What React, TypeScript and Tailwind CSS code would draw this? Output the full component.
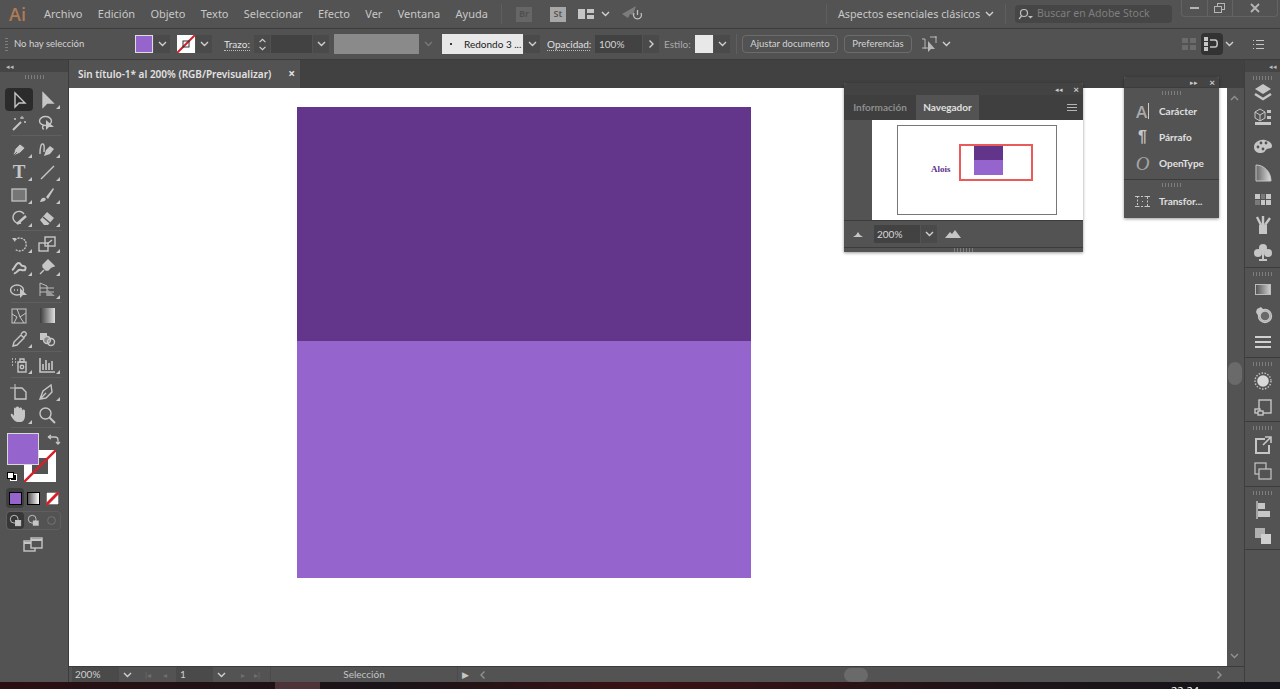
import type { ReactNode } from "react";

const MENU = ["Archivo", "Edición", "Objeto", "Texto", "Seleccionar", "Efecto", "Ver", "Ventana", "Ayuda"];

function Chevron({ className = "" }: { className?: string }) {
  return (
    <svg width="9" height="6" viewBox="0 0 9 6" className={className}>
      <path d="M1 1l3.5 3.5L8 1" fill="none" stroke="#d0d0d0" strokeWidth="1.4" />
    </svg>
  );
}

function ChevBox({ className = "", dim = false }: { className?: string; dim?: boolean }) {
  return (
    <div className={`flex h-[18px] w-4 shrink-0 items-center justify-center ${dim ? "" : "bg-[#4a4a4a]"} ${className}`}>
      <Chevron className={dim ? "opacity-30" : ""} />
    </div>
  );
}

function Grip({ className = "" }: { className?: string }) {
  return (
    <div
      className={`h-[4px] w-[19px] bg-[repeating-linear-gradient(90deg,#7d7d7d_0,#7d7d7d_1px,transparent_1px,transparent_3px)] ${className}`}
    />
  );
}

function Icon({ children, size = 20 }: { children: ReactNode; size?: number }) {
  return (
    <svg width={size} height={size} viewBox="0 0 20 20" fill="none" stroke="#c6c6c6" strokeWidth="1.4">
      {children}
    </svg>
  );
}

// celda de la barra de herramientas
function Tool({ children, fly = false, active = false }: { children: ReactNode; fly?: boolean; active?: boolean }) {
  return (
    <div className={`relative flex h-[23px] w-[28px] items-center justify-center ${active ? "rounded-sm bg-[#2b2b2b]" : ""}`}>
      {children}
      {fly && (
        <span className="absolute bottom-[2px] right-[1px] h-0 w-0 border-b-[4px] border-l-[4px] border-b-[#c6c6c6] border-l-transparent" />
      )}
    </div>
  );
}

function Row({ children }: { children: ReactNode }) {
  return <div className="flex">{children}</div>;
}

function Sep() {
  return <div className="mx-[6px] my-[1px] h-px bg-[#5f5f5f]" />;
}

function LeftToolbar() {
  return (
    <div className="flex w-[69px] flex-col border-r border-[#3c3c3c] bg-[#535353]">
      <div className="flex h-3 items-center bg-[#454545] pl-[6px] text-[7px] leading-none text-[#bbb]">◂◂</div>
      <Grip className="mx-auto mt-[3px] h-[3px]" />
      <div className="mt-[9px] pl-[5px]">
        <Row>
          <Tool active>
            <Icon><path d="M6 3v14l4-4h6z" /></Icon>
          </Tool>
          <Tool fly>
            <Icon><path d="M6 3v14l4-4h6z" fill="#c6c6c6" /></Icon>
          </Tool>
        </Row>
        <Row>
          <Tool>
            <Icon>
              <path d="M4 17l8-8" strokeWidth="2" />
              <path d="M13 3v3M11 5h4M16 8v2M15 9h2M6 5v2M5 6h2" strokeWidth="1" />
            </Icon>
          </Tool>
          <Tool>
            <Icon>
              <ellipse cx="8.5" cy="8" rx="6" ry="4.5" />
              <path d="M7 16c-2 0-2-3 0-4" />
              <path d="M9 7v10l3-3h5z" fill="#c6c6c6" stroke="none" />
            </Icon>
          </Tool>
        </Row>
        <Sep />
        <Row>
          <Tool fly>
            <Icon><path d="M4 17l2-7 5-5 5 4-5 5zM4 17l4-4" fill="#c6c6c6" stroke="#535353" strokeWidth="0.8" /></Icon>
          </Tool>
          <Tool fly>
            <Icon>
              <path d="M7 17l2-6 4-4 4 3-4 5z" fill="#c6c6c6" stroke="none" />
              <path d="M3 15c0-6 1-11 3-10s1 5 1 8" />
            </Icon>
          </Tool>
        </Row>
        <Row>
          <Tool fly>
            <span className="font-['Liberation_Serif',serif] text-[19px] font-bold leading-none text-[#c6c6c6]">T</span>
          </Tool>
          <Tool fly>
            <Icon><path d="M4 17L17 4" /></Icon>
          </Tool>
        </Row>
        <Row>
          <Tool fly>
            <Icon><rect x="3" y="4" width="14" height="12" fill="#767676" stroke="#bcbcbc" /></Icon>
          </Tool>
          <Tool fly>
            <Icon><path d="M3 17c1-4 3-5 5-4s0 4-5 4zM9 12l7-9 1 1-6 10z" fill="#c6c6c6" stroke="none" /></Icon>
          </Tool>
        </Row>
        <Row>
          <Tool fly>
            <Icon>
              <path d="M15 6a6 6 0 1 0-3 9" />
              <path d="M8 16l9-8" strokeWidth="2.4" />
            </Icon>
          </Tool>
          <Tool fly>
            <Icon><path d="M3 12l7-8 7 6-6 7H7z" fill="#c6c6c6" stroke="none" /><path d="M6 9l7 6" stroke="#535353" /></Icon>
          </Tool>
        </Row>
        <Sep />
        <Row>
          <Tool fly>
            <Icon>
              <path d="M6 6a6.5 6.5 0 1 1 0 9" strokeDasharray="2 1" />
              <path d="M3 4l4 0-1 4z" fill="#c6c6c6" stroke="none" />
            </Icon>
          </Tool>
          <Tool fly>
            <Icon>
              <rect x="2" y="9" width="9" height="8" />
              <rect x="8" y="3" width="10" height="9" />
              <path d="M10 10l5-4" />
            </Icon>
          </Tool>
        </Row>
        <Row>
          <Tool fly>
            <Icon><path d="M3 13c3-1 3-7 7-7 2 0 1 3 4 3s3 2 2 4c-3 1-4-1-6 0s-3 4-5 3" strokeWidth="2" /></Icon>
          </Tool>
          <Tool fly>
            <Icon><path d="M11 3l6 6-3 1-3 3-2 0-3-3 0-2 3-3zM7 13l-4 4" fill="#c6c6c6" /></Icon>
          </Tool>
        </Row>
        <Row>
          <Tool>
            <Icon>
              <ellipse cx="8" cy="10" rx="6.5" ry="5" />
              <path d="M5 10h1M8 10h1" />
              <path d="M11 8v10l3-3h4z" fill="#c6c6c6" stroke="none" />
            </Icon>
          </Tool>
          <Tool fly>
            <Icon>
              <path d="M3 3v13M3 3l7 3v10M3 8h14M3 12h14" strokeWidth="0.9" />
              <path d="M10 9l8 7h-8z" fill="#9a9a9a" stroke="none" />
            </Icon>
          </Tool>
        </Row>
        <Sep />
        <Row>
          <Tool>
            <Icon>
              <rect x="3" y="3" width="14" height="14" strokeWidth="1" />
              <path d="M3 8l5 3-3 6M17 7l-6 4 4 6M8 3l3 8" strokeWidth="1" />
            </Icon>
          </Tool>
          <Tool>
            <div className="h-[15px] w-[15px] bg-[linear-gradient(90deg,#3c3c3c,#e0e0e0)]" />
          </Tool>
        </Row>
        <Row>
          <Tool fly>
            <Icon><path d="M4 17l1-4 7-7 3 3-7 7zM12 5l2-2c2-1 4 1 3 3l-2 2" /></Icon>
          </Tool>
          <Tool>
            <Icon>
              <rect x="3" y="4" width="7" height="7" fill="#c6c6c6" stroke="none" />
              <circle cx="10" cy="11" r="3.5" fill="#8a8a8a" />
              <circle cx="14" cy="13" r="3.5" />
            </Icon>
          </Tool>
        </Row>
        <Sep />
        <Row>
          <Tool fly>
            <Icon>
              <rect x="9" y="7" width="8" height="10" />
              <circle cx="13" cy="12" r="1.7" />
              <path d="M11 4h4v3h-4zM3 4h1M6 4h1M3 7h1M6 7h1M3 10h1" />
            </Icon>
          </Tool>
          <Tool fly>
            <Icon><path d="M3 3v14h15M6 15V9M9 15V5M12 15V8M15 15V6" strokeWidth="1.6" /></Icon>
          </Tool>
        </Row>
        <Sep />
        <div className="h-px" />
        <Row>
          <Tool>
            <Icon><path d="M1 6h4M6 2v4" strokeWidth="1" /><path d="M6 6h7l4 4v7H6z" /></Icon>
          </Tool>
          <Tool fly>
            <Icon><path d="M3 17l3-8 8-6 1 7-6 6zM3 17l6-6" /></Icon>
          </Tool>
        </Row>
        <Row>
          <Tool fly>
            <Icon>
              <path d="M6 16c-3-3-5-6-4-7s3 2 3 2V4c0-2 2-2 2 0V3c0-2 3-2 3 0v1c0-2 3-2 3 0v2c0-2 3-2 3 0v5c0 3-2 6-4 6H8z" fill="#c6c6c6" stroke="none" />
            </Icon>
          </Tool>
          <Tool>
            <Icon><circle cx="8.5" cy="8.5" r="5.5" /><path d="M12.5 12.5L18 18" strokeWidth="2" /></Icon>
          </Tool>
        </Row>
        <Sep />
      </div>

      <div className="relative ml-[7px] mt-[4px] h-[49px] w-[49px]">
        <div className="absolute left-[17px] top-[17px] h-[32px] w-[32px] bg-white">
          <div className="absolute left-[8px] top-[8px] h-4 w-4 bg-[#535353]" />
          <svg className="absolute inset-0" viewBox="0 0 32 32">
            <path d="M0 32L32 0" stroke="#d4212b" strokeWidth="2.5" />
          </svg>
        </div>
        <div className="absolute left-0 top-0 h-[32px] w-[32px] border border-[#d8d8d8] bg-[#9664cd]" />
        <svg className="absolute left-[40px] top-0" width="14" height="13" viewBox="0 0 14 13" fill="none" stroke="#c6c6c6" strokeWidth="1.3">
          <path d="M2 4h6c2 0 3 1 3 3v4M1 4l3-2M1 4l3 2M9 9l2 2 2-2" />
        </svg>
      </div>
      <div className="relative ml-[6px] mt-[-10px] h-[9px] w-[11px]">
        <div className="absolute bottom-0 right-0 h-[7px] w-[7px] border border-white bg-black" />
        <div className="absolute left-[1px] top-0 h-[7px] w-[7px] border border-black bg-white" />
      </div>

      <div className="ml-[6px] mt-[7px] flex w-[57px] gap-[2px]">
        <div className="flex h-[20px] w-[18px] items-center justify-center rounded-sm bg-[#3f3f3f]">
          <div className="h-[13px] w-[13px] border border-black bg-[#9664cd]" />
        </div>
        <div className="flex h-[20px] w-[14px] items-center justify-center">
          <div className="h-[13px] w-[13px] border border-black bg-[linear-gradient(90deg,#555,#fff)]" />
        </div>
        <div className="ml-[3px] flex h-[20px] w-[14px] items-center justify-center">
          <svg width="13" height="13" viewBox="0 0 13 13">
            <rect width="13" height="13" fill="#fff" stroke="#000" />
            <path d="M0 13L13 0" stroke="#d4212b" strokeWidth="3" />
          </svg>
        </div>
      </div>

      <div className="ml-[6px] mt-[3px] flex h-[19px] w-[55px] rounded-sm border border-[#5f5f5f]">
        <div className="flex w-[17px] items-center justify-center rounded-sm bg-[#373737]">
          <Icon size={13}><circle cx="8" cy="8" r="6" /><rect x="10" y="10" width="8" height="8" fill="#c6c6c6" /></Icon>
        </div>
        <div className="flex w-[19px] items-center justify-center">
          <Icon size={13}><circle cx="8" cy="8" r="6" /><rect x="9" y="10" width="9" height="8" fill="#c6c6c6" stroke="none" /></Icon>
        </div>
        <div className="flex w-[17px] items-center justify-center opacity-30">
          <Icon size={13}><circle cx="10" cy="10" r="6" /></Icon>
        </div>
      </div>

      <div className="ml-[23px] mt-[5px]">
        <Icon>
          <rect x="1" y="6" width="11" height="10" fill="#535353" />
          <rect x="8" y="3" width="11" height="10" fill="#535353" />
          <path d="M8 5h11M1 8h7" strokeWidth="2" />
        </Icon>
      </div>
    </div>
  );
}

function DockIcon({ children, h = 26 }: { children: ReactNode; h?: number }) {
  return (
    <div className="flex w-full items-center justify-center" style={{ height: h }}>
      {children}
    </div>
  );
}

function DockGroup({ children }: { children: ReactNode }) {
  return (
    <div className="flex flex-col items-center border-b border-[#3c3c3c] pt-[4px]">
      <Grip />
      {children}
    </div>
  );
}

function RightDock() {
  return (
    <div className="flex w-[36px] flex-col border-l border-[#3e3e3e] bg-[#535353]">
      <div className="flex h-3 items-center justify-end bg-[#454545] pr-[3px] text-[7px] leading-none text-[#bbb]">◂◂</div>
      <DockGroup>
        <DockIcon h={24}>
          <Icon>
            <path d="M10 2l8 5-8 5-8-5z" fill="#c6c6c6" stroke="none" />
            <path d="M2 12l8 5 8-5" strokeWidth="2.4" />
          </Icon>
        </DockIcon>
        <DockIcon>
          <Icon>
            <path d="M7 2l5 3v6l-5 3-5-3V5zM2 5l5 3 5-3M7 8v6" strokeWidth="1" />
            <path d="M14 3h4v3h-4zM14 9h4v3h-4z" fill="#c6c6c6" stroke="none" />
            <rect x="2" y="15" width="16" height="3" fill="#c6c6c6" stroke="none" />
          </Icon>
        </DockIcon>
        <DockIcon h={30}>
          <Icon>
            <path d="M1 12c0-5 6-8 11-7 4 1 7 3 7 6s-3 2-5 3-2 4-6 4-7-2-7-6z" fill="#c6c6c6" stroke="none" />
            <circle cx="5" cy="12" r="1.4" fill="#535353" stroke="none" />
            <circle cx="8" cy="8" r="1.4" fill="#535353" stroke="none" />
            <circle cx="13" cy="8" r="1.4" fill="#535353" stroke="none" />
            <circle cx="10" cy="14" r="1.4" fill="#535353" stroke="none" />
          </Icon>
        </DockIcon>
        <DockIcon>
          <svg width="20" height="20" viewBox="0 0 20 20">
            <defs>
              <linearGradient id="sw" x1="0" x2="1">
                <stop offset="0" stopColor="#666" />
                <stop offset="1" stopColor="#ddd" />
              </linearGradient>
            </defs>
            <path d="M3 2c8 0 15 7 15 16H3z" fill="url(#sw)" stroke="#c6c6c6" />
          </svg>
        </DockIcon>
        <DockIcon>
          <svg width="16" height="11" viewBox="0 0 16 11" fill="#c6c6c6">
            <path d="M0 0h5v5H0zM6 0h4v5H6zM11 0h5v5h-5zM0 6h5v5H0zM6 6h4v5H6zM11 6h5v5h-5z" />
            <path d="M6 0h4v5H6zM0 6h5v5H0z" fill="#7a7a7a" />
          </svg>
        </DockIcon>
        <DockIcon>
          <Icon>
            <path d="M6 10h8v9H6z" fill="#c6c6c6" stroke="none" />
            <path d="M8 10L4 2M10 10V1M12 10l5-7" strokeWidth="2.4" />
          </Icon>
        </DockIcon>
        <DockIcon h={27}>
          <Icon>
            <circle cx="10" cy="6" r="4" fill="#c6c6c6" stroke="none" />
            <circle cx="5" cy="11" r="4" fill="#c6c6c6" stroke="none" />
            <circle cx="15" cy="11" r="4" fill="#c6c6c6" stroke="none" />
            <path d="M10 8v10M6 18h8" strokeWidth="2" />
          </Icon>
        </DockIcon>
        <div className="h-[2px]" />
      </DockGroup>
      <DockGroup>
        <DockIcon>
          <div className="h-[11px] w-4 border border-[#bbb] bg-[linear-gradient(90deg,#555,#ccc)]" />
        </DockIcon>
        <DockIcon>
          <Icon>
            <circle cx="12" cy="11" r="6.5" fill="#777" />
            <path d="M4 4l4-2 9 9-4 5c-3 0-9-6-10-9z" fill="#c6c6c6" stroke="none" />
            <circle cx="12" cy="11" r="5" fill="#6a6a6a" />
          </Icon>
        </DockIcon>
        <DockIcon h={27}>
          <svg width="16" height="12" viewBox="0 0 16 12" fill="#d0d0d0">
            <path d="M0 0h16v2H0zM0 5h16v2H0zM0 10h16v2H0z" />
          </svg>
        </DockIcon>
        <div className="h-[2px]" />
      </DockGroup>
      <DockGroup>
        <div className="h-[2px]" />
        <DockIcon>
          <Icon>
            <circle cx="10" cy="10" r="5.8" fill="#d8d8d8" stroke="none" />
            <circle cx="10" cy="10" r="8" strokeDasharray="1.5 1.5" strokeWidth="1.4" />
          </Icon>
        </DockIcon>
        <DockIcon>
          <Icon>
            <rect x="6" y="3" width="12" height="13" />
            <rect x="2" y="12" width="5" height="4" fill="#535353" />
            <rect x="5" y="14" width="5" height="4" fill="#535353" />
          </Icon>
        </DockIcon>
        <div className="h-px" />
      </DockGroup>
      <DockGroup>
        <div className="h-[2px]" />
        <DockIcon>
          <Icon>
            <path d="M12 4H3v14h13v-8" strokeWidth="2" />
            <path d="M10 10l7-7M12 2h6v6" strokeWidth="1.6" />
          </Icon>
        </DockIcon>
        <DockIcon>
          <Icon>
            <rect x="2" y="2" width="11" height="11" strokeWidth="1.2" />
            <rect x="6" y="8" width="12" height="10" fill="#535353" strokeWidth="1.2" />
          </Icon>
        </DockIcon>
        <div className="h-[2px]" />
      </DockGroup>
      <DockGroup>
        <div className="h-[2px]" />
        <DockIcon>
          <Icon>
            <path d="M4 1v18" strokeWidth="1.4" />
            <path d="M5 3h7v6H5zM5 11h12v6H5z" fill="#c6c6c6" stroke="none" />
          </Icon>
        </DockIcon>
        <DockIcon>
          <Icon>
            <path d="M2 2h10v6H8v4H2z" fill="#b0b0b0" stroke="none" />
            <path d="M8 8h10v10H8z" fill="#d0d0d0" stroke="none" />
          </Icon>
        </DockIcon>
      </DockGroup>
    </div>
  );
}

function ControlBar() {
  return (
    <div className="flex h-[32px] items-center whitespace-nowrap border-y border-[#3c3c3c] bg-[#525252] font-['Lato',sans-serif] text-[10px] text-[#d4d4d4]">
      <div className="ml-[5px] h-[14px] w-[3px] bg-[repeating-linear-gradient(0deg,#7d7d7d_0,#7d7d7d_1px,transparent_1px,transparent_3px)]" />
      <span className="ml-[6px] w-[121px] text-[9.500px]">No hay selección</span>
      <div className="h-[18px] w-[18px] border border-[#ddd] bg-[#9664cd]" />
      <ChevBox className="ml-px" />
      <svg className="ml-[7px]" width="18" height="18" viewBox="0 0 18 18">
        <rect width="18" height="18" fill="#fff" />
        <path d="M0 18L18 0" stroke="#d4212b" strokeWidth="2" />
        <rect x="6" y="6" width="6" height="6" fill="none" stroke="#333" />
      </svg>
      <ChevBox className="ml-px" />
      <span className="ml-3 w-[26px] border-b border-dotted border-[#bbb] leading-[12px] text-[#e0e0e0]">Trazo:</span>
      <div className="ml-[4px] flex h-[18px] w-4 flex-col items-center justify-center gap-[3px] bg-[#4a4a4a]">
        <Chevron className="h-[5px] rotate-180" />
        <Chevron className="h-[5px]" />
      </div>
      <div className="ml-px h-[18px] w-[41px] bg-[#424242]" />
      <ChevBox className="ml-px" />
      <div className="ml-[5px] h-[20px] w-[85px] bg-[#8a8a8a]" />
      <ChevBox className="ml-px" dim />
      <div className="ml-[6px] flex h-[20px] w-[81px] items-center bg-[#e8e8e8] text-[#1a1a1a]">
        <span className="ml-[8px] h-[2px] w-[2px] rounded-full bg-black" />
        <span className="ml-[12px]">Redondo 3 ...</span>
      </div>
      <ChevBox className="ml-px" />
      <span className="ml-[7px] w-[43px] border-b border-dotted border-[#bbb] leading-[12px] text-[#e0e0e0]">Opacidad:</span>
      <div className="ml-[5px] flex h-[18px] w-[47px] items-center bg-[#424242] pl-[4px]">100%</div>
      <div className="ml-px flex h-[18px] w-4 items-center justify-center bg-[#4a4a4a]">
        <Chevron className="-rotate-90" />
      </div>
      <span className="ml-[5px] w-[26px] text-[#aaa]">Estilo:</span>
      <div className="ml-[5px] h-[18px] w-[18px] bg-[#e8e8e8]" />
      <ChevBox className="ml-px" />
      <div className="ml-[6px] h-[20px] w-px bg-[#5f5f5f]" />
      <div className="ml-[5px] flex h-[18px] w-[96px] items-center justify-center rounded-sm border border-[#6c6c6c] text-[9.500px]">Ajustar documento</div>
      <div className="ml-[6px] flex h-[18px] w-[68px] items-center justify-center rounded-sm border border-[#6c6c6c] text-[9.500px]">Preferencias</div>
      <svg className="ml-[10px]" width="16" height="16" viewBox="0 0 16 16" fill="none" stroke="#b8b8b8">
        <path d="M0 3h3M8 1h6v6M3 3v10M0 12h8M14 0v2" />
        <path d="M6 5v11l3-3h4z" fill="#b8b8b8" stroke="none" />
      </svg>
      <Chevron className="ml-[4px]" />
      <svg className="ml-[231px]" width="14" height="14" viewBox="0 0 14 14" fill="#6b6b6b">
        <path d="M0 1h6v5H0zM8 1h6v5H8zM0 8h6v5H0zM8 8h6v5H8z" />
      </svg>
      <div className="ml-[5px] flex h-[22px] w-[22px] items-center justify-center rounded-sm bg-[#333]">
        <svg width="16" height="14" viewBox="0 0 16 14" fill="#c6c6c6">
          <path d="M0 0h4v4H0zM0 5h4v4H0zM0 10h4v4H0z" />
          <path d="M6 3h5c3 0 3 7 0 7H6" fill="none" stroke="#c6c6c6" strokeWidth="1.5" />
        </svg>
      </div>
      <Chevron className="ml-[2px]" />
      <svg className="ml-[19px]" width="11" height="9" viewBox="0 0 11 9" fill="#c6c6c6">
        <path d="M0 0h1v1H0zM3 0h8v1H3zM0 4h1v1H0zM3 4h8v1H3zM0 8h1v1H0zM3 8h8v1H3z" />
      </svg>
    </div>
  );
}

function MenuBar() {
  return (
    <div className="flex h-[28px] items-center bg-[#535353] text-[11px] text-[#c8c8c8]">
      <span className="ml-[9px] w-[35px] font-['Open_Sans',sans-serif] text-[18px] font-semibold leading-none text-[#b07a55]">Ai</span>
      <div className="flex gap-[15.3px]">
        {MENU.map((m) => (
          <span key={m}>{m}</span>
        ))}
      </div>
      <div className="ml-[13px] h-[20px] w-px bg-[#5f5f5f]" />
      <div className="ml-[14px] flex h-[15px] w-[16px] items-center justify-center bg-[#666] text-[9px] font-semibold text-[#4e4e4e]">Br</div>
      <div className="ml-[18px] flex h-[15px] w-[16px] items-center justify-center bg-[#a8a8a8] text-[9px] font-semibold text-[#555]">St</div>
      <svg className="ml-[12px]" width="16" height="10" viewBox="0 0 16 10" fill="#c6c6c6">
        <path d="M0 0h7v10H0zM9 0h7v4H9zM9 6h7v4H9z" />
      </svg>
      <Chevron className="ml-[7px]" />
      <svg className="ml-[12px]" width="21" height="16" viewBox="0 0 21 16" fill="none">
        <path d="M0 8L14 0l-3 9-3-1-2 4z" fill="#7c7c7c" />
        <path d="M12 7a4 4 0 1 0 7 0M15.500 4v5" stroke="#c0c0c0" strokeWidth="1.3" />
      </svg>
      <div className="ml-[183px] h-[20px] w-px bg-[#5f5f5f]" />
      <span className="ml-[11px] w-[143px] whitespace-nowrap text-[10.800px]">Aspectos esenciales clásicos</span>
      <Chevron className="ml-[4px]" />
      <div className="ml-[11px] h-[20px] w-px bg-[#5f5f5f]" />
      <div className="ml-[9px] flex h-[18px] w-[157px] items-center rounded-sm bg-[#464646] pl-[3px] text-[#7f7f7f]">
        <svg width="15" height="12" viewBox="0 0 15 12" fill="none" stroke="#c0c0c0" strokeWidth="1.2">
          <circle cx="6" cy="5" r="3.500" />
          <path d="M3.500 8L1 11" />
          <path d="M10 8h5l-2.500 2.500z" fill="#c0c0c0" stroke="none" />
        </svg>
        <span className="ml-[4px] text-[10.500px]">Buscar en Adobe Stock</span>
      </div>
      <div className="ml-[9px] flex h-[17px] self-start rounded-b-sm border border-t-0 border-[#636363]">
        <div className="flex w-[26px] items-center justify-center border-r border-[#636363]">
          <div className="h-[2px] w-[9px] bg-[#b5b5b5]" />
        </div>
        <div className="flex w-[25px] items-center justify-center border-r border-[#636363]">
          <svg width="11" height="10" viewBox="0 0 11 10" fill="#535353" stroke="#b5b5b5">
            <rect x="3.500" y="0.500" width="7" height="6" />
            <rect x="0.500" y="3.500" width="7" height="6" />
          </svg>
        </div>
        <div className="flex w-[44px] items-center justify-center">
          <svg width="10" height="10" viewBox="0 0 10 10" stroke="#b5b5b5" strokeWidth="1.8">
            <path d="M1 1l8 8M9 1l-8 8" />
          </svg>
        </div>
      </div>
    </div>
  );
}

function NavigatorPanel() {
  return (
    <div className="absolute left-[844px] top-[83px] w-[239px] bg-[#535353] font-['Lato',sans-serif] text-[10px] shadow-[0_1px_3px_rgba(0,0,0,0.4)]">
      <div className="flex h-3 items-center justify-end gap-[10px] rounded-t-sm bg-[#434343] pr-[4px] text-[7px] leading-none text-[#ccc]">
        <span>◂◂</span>
        <span className="text-[10px] font-bold">×</span>
      </div>
      <div className="flex h-[25px] items-stretch bg-[#3f3f3f] font-bold">
        <div className="flex w-[72px] items-center justify-center text-[#8d8d8d]">Información</div>
        <div className="flex w-[63px] items-center justify-center bg-[#535353] text-[#e0e0e0]">Navegador</div>
        <svg className="ml-auto mr-[6px] self-center" width="10" height="7" viewBox="0 0 10 7" fill="#b5b5b5">
          <path d="M0 0h10v1H0zM0 3h10v1H0zM0 6h10v1H0z" />
        </svg>
      </div>
      <div className="ml-[28px] h-[100px] bg-white pl-[25px] pt-[5px]">
        <div className="relative h-[90px] w-[160px] border border-[#777] bg-white">
          <span className="absolute left-[33px] top-[37px] font-['Liberation_Serif',serif] text-[9px] font-bold text-[#5d2f8c]">Alois</span>
          <div className="absolute left-[61px] top-[18px] h-[37px] w-[74px] border-2 border-[#ea5a5a]" />
          <div className="absolute left-[76px] top-[20px] h-[14px] w-[29px] bg-[#63358a]" />
          <div className="absolute left-[76px] top-[34px] h-[15px] w-[29px] bg-[#9664cd]" />
        </div>
      </div>
      <div className="flex h-[27px] items-center border-t border-[#3c3c3c] text-[#d8d8d8]">
        <svg className="ml-[9px]" width="10" height="6" viewBox="0 0 10 6" fill="#c6c6c6">
          <path d="M0 6l3-2 2-3 2 3 3 2z" />
        </svg>
        <div className="ml-[11px] flex h-[18px] w-[46px] items-center bg-[#424242] pl-[3px]">200%</div>
        <ChevBox className="ml-px" />
        <svg className="ml-[8px]" width="16" height="8" viewBox="0 0 16 8" fill="#c6c6c6">
          <path d="M0 8l5-6 2 2 3-4 6 8z" />
        </svg>
      </div>
      <div className="flex h-[5px] items-center justify-center border-t border-[#3c3c3c]">
        <Grip className="h-[3px]" />
      </div>
    </div>
  );
}

function PanelItem({ icon, label }: { icon: ReactNode; label: string }) {
  return (
    <div className="flex h-[26px] items-center">
      <div className="flex w-[35px] justify-center pl-[2px]">{icon}</div>
      <span className="font-bold text-[#e0e0e0]">{label}</span>
    </div>
  );
}

function CharPanel() {
  return (
    <div className="absolute left-[1124px] top-[77px] w-[95px] bg-[#535353] font-['Lato',sans-serif] text-[10px] shadow-[0_1px_3px_rgba(0,0,0,0.4)]">
      <div className="flex h-[11px] items-center justify-end gap-[11px] rounded-t-sm border-b border-[#3c3c3c] bg-[#444] pr-[4px] text-[7px] leading-none text-[#ccc]">
        <span>▸▸</span>
        <span className="text-[10px] font-bold">×</span>
      </div>
      <Grip className="mx-auto mt-[3px] h-[3px]" />
      <div className="mt-[3px]">
        <PanelItem
          icon={
            <span className="flex items-center">
              <span className="font-['Open_Sans',sans-serif] text-[17px] font-semibold leading-none text-[#aaa]">A</span>
              <span className="ml-px h-[16px] w-px bg-[#ccc]" />
            </span>
          }
          label="Carácter"
        />
        <PanelItem
          icon={
            <span className="font-['Liberation_Sans',sans-serif] text-[16px] font-bold leading-none text-[#c6c6c6]">¶</span>
          }
          label="Párrafo"
        />
        <PanelItem
          icon={
            <span className="font-['Liberation_Serif',serif] text-[19px] italic leading-none text-[#a5a5a5]">O</span>
          }
          label="OpenType"
        />
      </div>
      <div className="mt-[3px] border-t border-[#3c3c3c] pt-[3px]">
        <Grip className="mx-auto h-[3px]" />
        <div className="mt-[1px] pb-[4px]">
          <PanelItem
            icon={
              <svg width="15" height="15" viewBox="0 0 15 15" fill="none" stroke="#c6c6c6">
                <rect x="2.500" y="2.500" width="10" height="10" strokeDasharray="2 1.500" />
                <path d="M0 2h4v1H0zM11 2h4v1h-4zM0 12h4v1H0zM11 12h4v1h-4zM7 7h1v1H7z" fill="#c6c6c6" stroke="none" />
              </svg>
            }
            label="Transfor..."
          />
        </div>
      </div>
    </div>
  );
}

function StatusBar() {
  return (
    <div className="flex h-[16px] items-center border-t border-[#3c3c3c] bg-[#535353] font-['Lato',sans-serif] text-[10px] text-[#d0d0d0]">
      <div className="ml-[3px] flex h-[15px] w-[47px] items-center bg-[#4a4a4a] pl-[3px]">200%</div>
      <Chevron className="ml-[4px]" />
      <span className="ml-[11px] w-[10px] text-center text-[8px] leading-none text-[#707070]">|◂</span>
      <span className="ml-[7px] w-[10px] text-center text-[8px] leading-none text-[#707070]">◂</span>
      <div className="ml-[6px] flex h-[15px] w-[37px] items-center bg-[#4a4a4a] pl-[4px]">1</div>
      <Chevron className="ml-[4px]" />
      <span className="ml-[12px] w-[10px] text-center text-[8px] leading-none text-[#707070]">▸</span>
      <span className="ml-[4px] w-[10px] text-center text-[8px] leading-none text-[#707070]">▸|</span>
      <div className="ml-[8px] flex h-[15px] w-[188px] items-center justify-center border-x border-[#4a4a4a] text-[#c4c4c4]">Selección</div>
      <span className="ml-[2px] w-[10px] text-center text-[9px] leading-none text-[#c6c6c6]">▶</span>
      <Chevron className="ml-[8px] rotate-90 opacity-50" />
      <div className="ml-[357px] h-[14px] w-[24px] rounded-full bg-[#6a6a6a]" />
      <Chevron className="ml-auto mr-[20px] -rotate-90 opacity-50" />
    </div>
  );
}

export default function App() {
  return (
    <div className="relative flex h-[689px] w-[1280px] flex-col overflow-hidden bg-[#535353] font-['Noto_Sans',sans-serif]">
      <MenuBar />
      <ControlBar />
      <div className="flex h-[622px] min-h-0">
        <LeftToolbar />
        <div className="flex min-w-0 flex-1 flex-col">
          <div className="flex h-[28px] bg-[#414141]">
            <div className="flex w-[231px] items-center justify-between bg-[#535353] pl-[9px] pr-[5px] text-[10px] font-semibold text-[#e2e2e2]">
              <span className="whitespace-nowrap">Sin título-1* al 200% (RGB/Previsualizar)</span>
              <span className="text-[12px] font-bold leading-none">×</span>
            </div>
          </div>
          <div className="flex min-h-0 flex-1">
            <div className="flex-1 bg-white pl-[228px] pt-[19px]">
              <div className="h-[234px] w-[454px] bg-[#64368b]" />
              <div className="h-[237px] w-[454px] bg-[#9664cd]" />
            </div>
            <div className="flex w-[17px] flex-col items-center justify-between bg-[#535353] py-[7px] pr-[2px]">
              <Chevron className="rotate-180 opacity-50" />
              <div className="mb-[258px] mt-[250px] h-[23px] w-[14px] rounded-full bg-[#6a6a6a]" />
              <Chevron className="opacity-50" />
            </div>
          </div>
          <StatusBar />
        </div>
        <RightDock />
      </div>
      <div className="relative flex h-[7px] bg-[linear-gradient(90deg,#2a0f12,#1a1418_30%,#3a1214_50%,#1c1418_80%,#14141a)]">
        <div className="ml-[275px] h-full w-[45px] bg-[#4c3438]" />
        <span className="absolute left-[1171px] top-[3px] text-[11px] leading-none text-white">22:24</span>
      </div>
      <NavigatorPanel />
      <CharPanel />
    </div>
  );
}
